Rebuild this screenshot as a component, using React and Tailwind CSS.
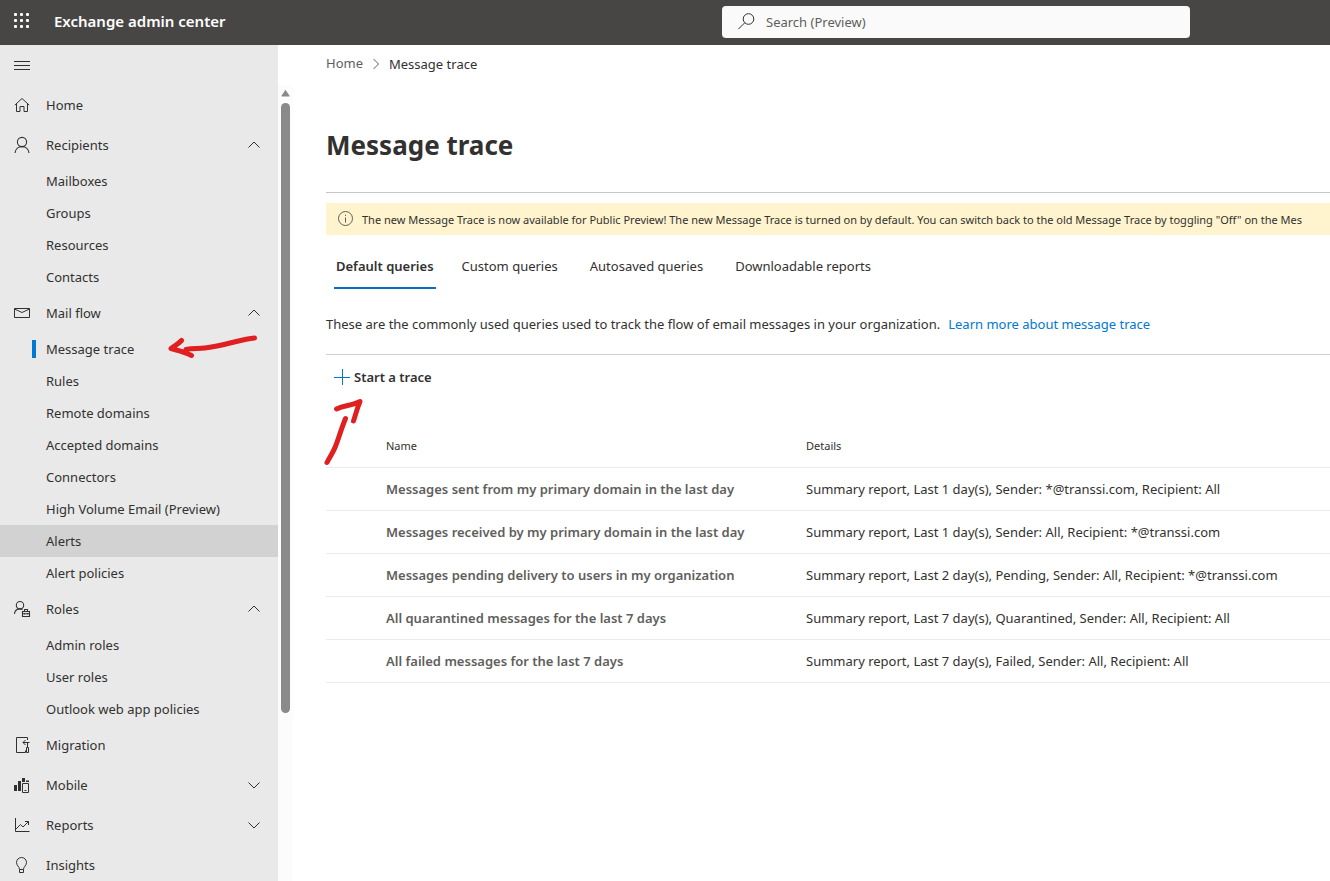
import React from "react";

const stroke = { fill: "none", stroke: "currentColor", strokeWidth: 1 };

const icons = {
  home: (
    <g {...stroke}>
      <path d="M.8 8.100 8 1.500l7.200 6.600M2.500 6.700V14.500h3.500V9.500h4v5h3.500V6.700" />
    </g>
  ),
  person: (
    <g {...stroke} strokeWidth="1.1">
      <circle cx="8" cy="5" r="4.600" />
      <path d="M1 16c.3-3.800 3.200-6.400 7-6.400s6.700 2.600 7 6.400" />
    </g>
  ),
  mail: (
    <g {...stroke}>
      <path d="M.5 3.500h15v9H.5zM.5 4 8 7.500l7.500-3.500" />
    </g>
  ),
  roles: (
    <g {...stroke} strokeWidth="1.1">
      <circle cx="6" cy="4.200" r="3.700" />
      <path d="M.5 13C.7 9.900 3 7.900 6 7.900c1 0 1.800.2 2.500.6M8.500 10.500h7v5h-7zM10.500 10.500v-2h3v2M8.500 12.700h7M10.500 12v1.500M13.500 12v1.500" />
    </g>
  ),
  migration: (
    <g {...stroke}>
      <path d="M13.500 3V.5H2.500v15h9v-2M15.500 5.500H9M11.500 3 9 5.500 11.500 8M13.500 6v4M12.500 10.500h2v5h-2z" />
    </g>
  ),
  mobile: (
    <g>
      <path fill="currentColor" d="M0 8h3v6H0zM4 4h3v10H4zM8 1h3v4H8zM12 3.500h3V5h-3z" />
      <path {...stroke} d="M8.500 6.500h6v9h-6zM10.500 13.500h2" />
    </g>
  ),
  reports: (
    <g {...stroke}>
      <path d="M1.500 1v13.500H15.500M2 12l4.500-4.500L9 10l5.500-5.500M11 4.500h3.500V8" />
    </g>
  ),
  bulb: (
    <g {...stroke}>
      <path d="M5.500 12.500c0-3-3-3.700-3-7A5 5 0 0 1 7.500.5a5 5 0 0 1 5 5c0 3.300-3 4-3 7zM5.500 12.500v3h4v-3" />
    </g>
  ),
};

const sections = [
  { label: "Home", icon: "home" },
  { label: "Recipients", icon: "person", open: true, items: ["Mailboxes", "Groups", "Resources", "Contacts"] },
  {
    label: "Mail flow",
    icon: "mail",
    open: true,
    items: [
      "Message trace",
      "Rules",
      "Remote domains",
      "Accepted domains",
      "Connectors",
      "High Volume Email (Preview)",
      "Alerts",
      "Alert policies",
    ],
  },
  { label: "Roles", icon: "roles", open: true, items: ["Admin roles", "User roles", "Outlook web app policies"] },
  { label: "Migration", icon: "migration" },
  { label: "Mobile", icon: "mobile", open: false, items: [] },
  { label: "Reports", icon: "reports", open: false, items: [] },
  { label: "Insights", icon: "bulb" },
];

const rows = [
  ["Messages sent from my primary domain in the last day", "Summary report, Last 1 day(s), Sender: *@transsi.com, Recipient: All"],
  ["Messages received by my primary domain in the last day", "Summary report, Last 1 day(s), Sender: All, Recipient: *@transsi.com"],
  ["Messages pending delivery to users in my organization", "Summary report, Last 2 day(s), Pending, Sender: All, Recipient: *@transsi.com"],
  ["All quarantined messages for the last 7 days", "Summary report, Last 7 day(s), Quarantined, Sender: All, Recipient: All"],
  ["All failed messages for the last 7 days", "Summary report, Last 7 day(s), Failed, Sender: All, Recipient: All"],
];

const tabs = ["Custom queries", "Autosaved queries", "Downloadable reports"];

function Chevron({ open }) {
  return (
    <svg width="14" height="14" viewBox="0 0 14 14" aria-hidden="true">
      <path {...stroke} d={open ? "M1.500 9.500 7 4l5.500 5.500" : "M1.500 4.500 7 10l5.500-5.500"} />
    </svg>
  );
}

function Section({ section }) {
  const body = (
    <>
      <svg width="16" height="16" viewBox="0 0 16 16" className="shrink-0 overflow-visible" aria-hidden="true">
        {icons[section.icon]}
      </svg>
      <span className="grow pt-0.5 text-left">{section.label}</span>
    </>
  );
  return (
    <li>
      {section.items ? (
        <button type="button" aria-expanded={section.open} className="flex h-10 w-full items-center gap-4 pr-[17px] pl-3.5">
          {body}
          <Chevron open={section.open} />
        </button>
      ) : (
        <a href="#" className="flex h-10 items-center gap-4 pr-[17px] pl-3.5">
          {body}
        </a>
      )}
      {section.open && (
        <ul>
          {section.items.map((item) => (
            <li key={item}>
              <a href="#" className={`flex h-8 items-center pl-8 ${item === "Alerts" ? "bg-[#d2d2d2]" : ""}`}>
                <span className={`h-[18px] w-1 ${item === "Message trace" ? "bg-[#0078d4]" : ""}`} />
                <span className="pt-0.5 pl-2.5">{item}</span>
              </a>
            </li>
          ))}
        </ul>
      )}
    </li>
  );
}

function Header() {
  return (
    <header className="flex h-[45px] shrink-0 items-center bg-[#484644] pb-0.5 text-white">
      <button type="button" aria-label="App launcher" className="ml-3.5">
        <svg width="16" height="16" viewBox="0 0 16 16" fill="currentColor" className="-mt-0.5">
          {[0, 6, 12].map((y) => [0, 6, 12].map((x) => <rect key={x + "-" + y} x={x} y={y} width="3" height="3" rx="1" />))}
        </svg>
      </button>
      <div className="w-[692px] shrink-0 pl-6 text-[15px] font-semibold">Exchange admin center</div>
      <label className="flex h-8 w-[468px] items-center gap-[11px] rounded bg-[#fafafa] pl-4 text-[#323130]">
        <svg width="17" height="17" viewBox="0 0 17 17" aria-hidden="true" className="shrink-0">
          <g {...stroke}>
            <circle cx="10.500" cy="6" r="5.300" />
            <path d="M6.700 9.800.5 16" />
          </g>
        </svg>
        <input
          type="search"
          aria-label="Search"
          placeholder="Search (Preview)"
          className="w-full bg-transparent pt-0.5 text-[13px] outline-none placeholder:text-[#605e5c]"
        />
      </label>
    </header>
  );
}

export default function App() {
  return (
    <div className="flex h-screen flex-col overflow-hidden bg-white font-['Noto_Sans','Open_Sans',sans-serif] text-[13px] text-[#323130]">
      <Header />
      <div className="flex min-h-0 grow">
        <nav aria-label="Main" className="relative w-[278px] shrink-0 overflow-hidden bg-[#e9e9e9]">
          <button type="button" aria-label="Collapse navigation" className="flex h-10 items-center pl-3.5">
            <svg width="16" height="16" viewBox="0 0 16 16">
              <path {...stroke} d="M0 4.500h16M0 8.500h16M0 12.500h16" />
            </svg>
          </button>
          <ul>
            {sections.map((s) => (
              <Section key={s.label} section={s} />
            ))}
          </ul>
          <svg className="absolute top-[287px] left-[164px]" width="100" height="30" viewBox="164 332 100 30" aria-hidden="true">
            <path
              d="M254.500 338C241 339 228 345 205 348c-7 1-12 0-19 1.500M181.500 340.500C178 344.500 174 345.500 171 348.500c7 2 13 3 20.500 7"
              fill="none"
              stroke="#e02020"
              strokeWidth="5"
              strokeLinecap="round"
              strokeLinejoin="round"
            />
          </svg>
        </nav>
        <div className="mt-10 flex w-[15px] shrink-0 flex-col items-center bg-[#fcfcfc] pt-1" aria-hidden="true">
          <svg width="9" height="8" viewBox="0 0 10 8" className="shrink-0">
            <path d="M5 .5 9.500 7Q9.500 8 8.500 8h-7Q.5 8 .5 7z" fill="#8a8a8a" />
          </svg>
          <div className="mt-1.5 h-[610px] w-[9px] rounded-full bg-[#8a8a8a]" />
        </div>
        <main className="relative min-w-0 grow overflow-hidden pl-[33px]">
          <nav aria-label="Breadcrumb" className="flex h-[38px] items-center gap-2">
            <a href="#" className="text-[#605e5c]">Home</a>
            <svg width="10" height="12" viewBox="0 0 10 12" className="text-[#605e5c]" aria-hidden="true">
              <path {...stroke} d="M2.500 1l5 5-5 5" />
            </svg>
            <a href="#" className="pt-0.5">Message trace</a>
          </nav>
          <h1 className="flex h-[109px] items-center pt-4 text-[26px] font-bold">Message trace</h1>
          <div className="border-t border-[#c8c6c4] pt-2.5">
            <div className="flex h-8 items-center gap-2 bg-[#fff4ce] pl-3 whitespace-nowrap">
              <svg width="16" height="16" viewBox="0 0 16 16" className="shrink-0 text-[#605e5c]" aria-hidden="true">
                <circle {...stroke} cx="7.500" cy="7.500" r="7" />
                <path {...stroke} d="M7.500 6.500v5M7.500 3.700v1.200" />
              </svg>
              <p className="pt-0.5 text-[11px]">
                The new Message Trace is now available for Public Preview! The new Message Trace is turned on by default. You can switch back to the old Message Trace by toggling "Off" on the Mes
              </p>
            </div>
          </div>
          <div role="tablist" className="flex h-[54px] items-stretch gap-5 pl-2">
            <button type="button" role="tab" aria-selected="true" className="border-b-2 border-[#0f6cbd] px-0.5 pt-3 font-semibold">
              Default queries
            </button>
            {tabs.map((t) => (
              <button key={t} type="button" role="tab" aria-selected="false" className="border-b-2 border-transparent px-1.5 pt-3">
                {t}
              </button>
            ))}
          </div>
          <p className="flex h-[65px] items-center gap-2 pt-1.5 whitespace-nowrap">
            These are the commonly used queries used to track the flow of email messages in your organization.{" "}
            <a href="#" className="text-[#0078d4]">Learn more about message trace</a>
          </p>
          <div className="h-[72px] border-t border-[#d2d0ce]">
            <button type="button" className="flex h-11 items-center gap-1 pl-2 font-semibold">
              <svg width="16" height="16" viewBox="0 0 16 16" className="text-[#0078d4]" aria-hidden="true">
                <path {...stroke} d="M0 8.500h16M8.500 0v16" />
              </svg>
              <span className="pt-0.5">Start a trace</span>
            </button>
          </div>
          <table className="w-full table-fixed text-left whitespace-nowrap">
            <thead>
              <tr className="h-[41px] border-b border-[#edebe9] text-[11px]">
                <td className="w-[60px]" />
                <th scope="col" className="w-[420px] font-normal">Name</th>
                <th scope="col" className="font-normal">Details</th>
              </tr>
            </thead>
            <tbody>
              {rows.map(([name, details]) => (
                <tr key={name} className="h-[43px] border-b border-[#edebe9]">
                  <td />
                  <td className="pt-0.5 font-semibold text-[#605e5c]">{name}</td>
                  <td className="pt-0.5">{details}</td>
                </tr>
              ))}
            </tbody>
          </table>
          <svg className="absolute top-[350px] left-[27px]" width="50" height="75" viewBox="320 395 50 75" aria-hidden="true">
            <path
              d="M327 462.500c3-6 6-10 8-15 4-10 6-18 10.500-29M336.500 409c8-4 15-3 23.500-7.500-3 7-4 12-6.500 19.500"
              fill="none"
              stroke="#e02020"
              strokeWidth="5"
              strokeLinecap="round"
              strokeLinejoin="round"
            />
          </svg>
        </main>
      </div>
    </div>
  );
}
